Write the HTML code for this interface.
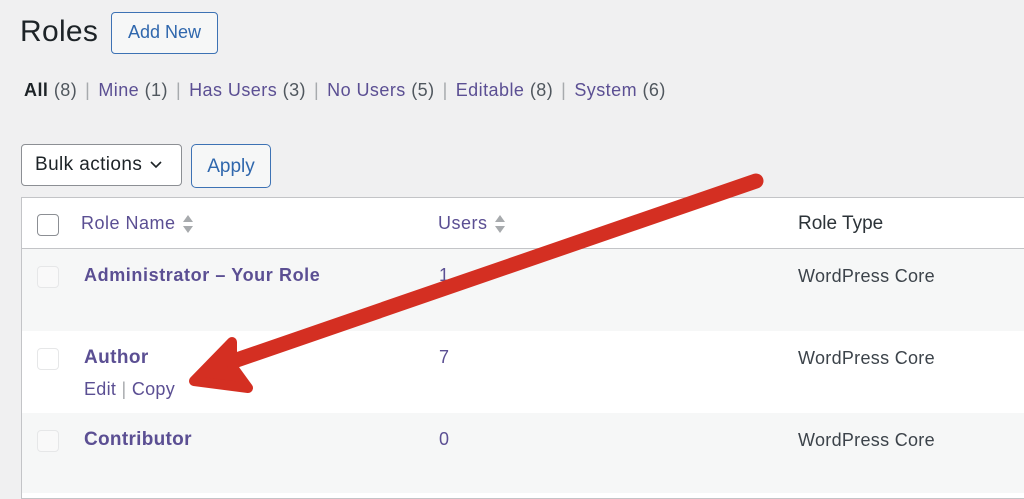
<!DOCTYPE html>
<html><head><style>
body{margin:0;width:1024px;height:491px;background:#f0f0f1;font-family:"Liberation Sans",Arial,sans-serif;position:relative;overflow:hidden;color:#1d2327}
.a{position:absolute;white-space:nowrap}
.lk{color:#5b4f93}
.cnt{color:#50575e}
.sep{color:#a7aaad;margin:0 8px}
.cb{position:absolute;width:20px;height:20px;border:1px solid #e6e7e8;border-radius:4px;background:#f9f9f9}
.so{display:inline-block;vertical-align:middle;margin-left:6px}
</style></head><body>
<div class="a" style="left:20px;top:15px;font-size:30px;letter-spacing:0.3px;color:#1d2327">Roles</div>
<div class="a" style="left:111px;top:12px;width:107px;height:42px;border:1.5px solid #3d72b4;border-radius:4px;background:#f6f7f7;box-sizing:border-box;color:#2f67ad;font-size:18px;line-height:39px;text-align:center">Add New</div>
<div class="a" style="left:24px;top:80px;font-size:18px;letter-spacing:0.45px"><b style="color:#1d2327">All</b> <span class="cnt">(8)</span><span class="sep">|</span><span class="lk">Mine</span> <span class="cnt">(1)</span><span class="sep">|</span><span class="lk">Has Users</span> <span class="cnt">(3)</span><span class="sep">|</span><span class="lk">No Users</span> <span class="cnt">(5)</span><span class="sep">|</span><span class="lk">Editable</span> <span class="cnt">(8)</span><span class="sep">|</span><span class="lk">System</span> <span class="cnt">(6)</span></div>
<div class="a" style="left:21px;top:144px;width:161px;height:42px;border:1px solid #8c8f94;border-radius:4px;background:#fff;box-sizing:border-box;font-size:19px;letter-spacing:0.4px;line-height:40px;padding-left:13px">Bulk actions<svg width="14" height="10" style="margin-left:7px" viewBox="0 0 14 10"><path d="M2 2l5 5 5-5" fill="none" stroke="#1d2327" stroke-width="1.6"/></svg></div>
<div class="a" style="left:191px;top:144px;width:80px;height:44px;border:1.5px solid #3d72b4;border-radius:5px;background:#f6f7f7;box-sizing:border-box;color:#2f67ad;font-size:19px;line-height:44px;text-align:center">Apply</div>
<div class="a" style="left:21px;top:197px;width:1010px;height:300px;border:1px solid #c3c4c7;background:#fff"></div>
<div class="a" style="left:22px;top:248px;width:1004px;height:1px;background:#c3c4c7"></div>
<div class="a" style="left:22px;top:249px;width:1004px;height:82px;background:#f6f7f7"></div>
<div class="a" style="left:22px;top:413px;width:1004px;height:80px;background:#f6f7f7"></div>
<div class="a" style="left:37px;top:214px;width:20px;height:20px;border:1.5px solid #8c8f94;border-radius:4px;background:#fff"></div>
<div class="a lk" style="left:81px;top:213px;font-size:18px;letter-spacing:0.5px">Role Name<svg class="so" width="12" height="20" viewBox="0 0 12 20"><path d="M6 1L11 8H1Z M6 19L11 12H1Z" fill="#a7aaad"/></svg></div>
<div class="a lk" style="left:438px;top:213px;font-size:18px;letter-spacing:0.5px">Users<svg class="so" width="12" height="20" viewBox="0 0 12 20"><path d="M6 1L11 8H1Z M6 19L11 12H1Z" fill="#a7aaad"/></svg></div>
<div class="a" style="left:798px;top:213px;font-size:19px;color:#2c3338">Role Type</div>
<div class="cb" style="left:37px;top:266px"></div>
<div class="cb" style="left:37px;top:348px;background:#fff"></div>
<div class="cb" style="left:37px;top:430px"></div>
<div class="a lk" style="left:84px;top:265px;font-size:18px;font-weight:bold;letter-spacing:0.6px">Administrator – Your Role</div>
<div class="a lk" style="left:84px;top:347px;font-size:19px;font-weight:bold;letter-spacing:0.4px">Author</div>
<div class="a lk" style="left:84px;top:379px;font-size:18px;letter-spacing:0.3px">Edit <span style="color:#a7aaad">|</span> Copy</div>
<div class="a lk" style="left:84px;top:429px;font-size:19px;font-weight:bold;letter-spacing:0.3px">Contributor</div>
<div class="a lk" style="left:439px;top:265px;font-size:18px">1</div>
<div class="a lk" style="left:439px;top:347px;font-size:18px">7</div>
<div class="a lk" style="left:439px;top:429px;font-size:18px">0</div>
<div class="a" style="left:798px;top:266px;font-size:18px;letter-spacing:0.3px;color:#3c434a">WordPress Core</div>
<div class="a" style="left:798px;top:348px;font-size:18px;letter-spacing:0.3px;color:#3c434a">WordPress Core</div>
<div class="a" style="left:798px;top:430px;font-size:18px;letter-spacing:0.3px;color:#3c434a">WordPress Core</div>
<svg class="a" style="left:0;top:0" width="1024" height="491">
<g stroke="#d42f22" stroke-linecap="round" stroke-linejoin="round" fill="#d42f22">
<path d="M756 181 L225 364" stroke-width="15" fill="none"/>
<path d="M232 342 L194 381 L248 388 L232 366 Z" stroke-width="10"/>
</g>
</svg>
</body></html>
